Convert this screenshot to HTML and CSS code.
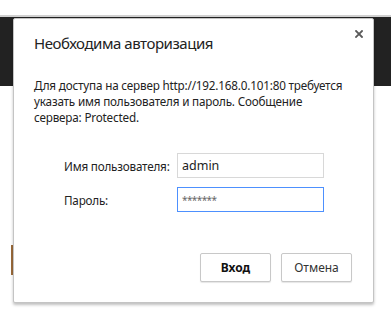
FILE: index.html
```html
<!DOCTYPE html>
<html lang="ru">
<head>
<meta charset="utf-8">
<link rel="stylesheet" href="styles.css">
</head>
<body>
<div class="page">
  <div class="topstrip"></div>
  <div class="darkband"></div>
  <div class="brownbar"></div>
  <div class="dialog">
    <svg class="close" width="8" height="8" viewBox="0 0 8 8"><path d="M1 1 L7 7 M7 1 L1 7" stroke="#5a5a5a" stroke-width="1.8" stroke-linecap="square"/></svg>
    <h1 class="title">Необходима авторизация</h1>
    <p class="message">Для доступа на сервер http://192.168.0.101:80 требуется<br>указать имя пользователя и пароль. Сообщение<br>сервера: Protected.</p>
    <div class="form">
      <div class="row">
        <label class="label">Имя пользователя:</label>
        <div class="input">admin</div>
      </div>
      <div class="row">
        <label class="label">Пароль:</label>
        <div class="input focused">*******</div>
      </div>
    </div>
    <div class="buttons">
      <div class="btn primary">Вход</div>
      <div class="btn">Отмена</div>
    </div>
  </div>
</div>
</body>
</html>
```
FILE: styles.css
```css
html, body {
  margin: 0;
  padding: 0;
  background: #ffffff;
}
.page {
  position: relative;
  width: 391px;
  height: 318px;
  overflow: hidden;
  font-family: "Noto Sans", "Open Sans", sans-serif;
  color: #222;
}
.topstrip {
  height: 15px;
  border-bottom: 2px solid #d0d0d0;
  background: #fff;
}
.darkband {
  height: 69px;
  background: #222222;
}
.brownbar {
  position: absolute;
  left: 11px;
  top: 245px;
  width: 2px;
  height: 30px;
  background: #9c6b3a;
}
.dialog {
  position: absolute;
  left: 13px;
  top: 18px;
  width: 361px;
  height: 285px;
  box-sizing: border-box;
  padding: 0 20px;
  background: #fff;
  border: 1px solid #c4c4c4;
  border-radius: 2px;
  box-shadow: 0 2px 3px rgba(0,0,0,0.25);
}
.close {
  position: absolute;
  right: 10px;
  top: 11px;
}
.title {
  margin: 12px 0 0 0;
  font-size: 15px;
  letter-spacing: -0.45px;
  font-weight: normal;
  line-height: 24px;
  color: #222;
}
.message {
  margin: 22px 0 0 0;
  font-size: 11.7px;
  letter-spacing: -0.18px;
  line-height: 16px;
  white-space: nowrap;
  color: #222;
}
.form {
  margin-top: 28px;
  padding-left: 30px;
  display: flex;
  flex-direction: column;
  gap: 9px;
}
.row {
  display: flex;
  align-items: center;
}
.label {
  width: 113px;
  font-size: 11.7px;
  letter-spacing: -0.2px;
  color: #222;
}
.input {
  width: 147px;
  height: 25px;
  box-sizing: border-box;
  border: 1px solid #d8d8d8;
  font-size: 12.5px;
  line-height: 23px;
  padding-left: 4px;
  color: #222;
}
.input.focused {
  border-color: #4d90fe;
  color: #666;
  font-size: 10px;
  letter-spacing: -0.6px;
  line-height: 25px;
}
.buttons {
  position: absolute;
  right: 21px;
  bottom: 20px;
  display: flex;
  gap: 10px;
}
.btn {
  width: 71px;
  height: 29px;
  box-sizing: border-box;
  border: 1px solid #c8c8c8;
  border-radius: 2px;
  background: #fff;
  box-shadow: 0 1px 1px rgba(0,0,0,0.1);
  font-size: 12px;
  line-height: 27px;
  text-align: center;
  color: #333;
}
.btn.primary {
  font-weight: bold;
  color: #111;
}
```
